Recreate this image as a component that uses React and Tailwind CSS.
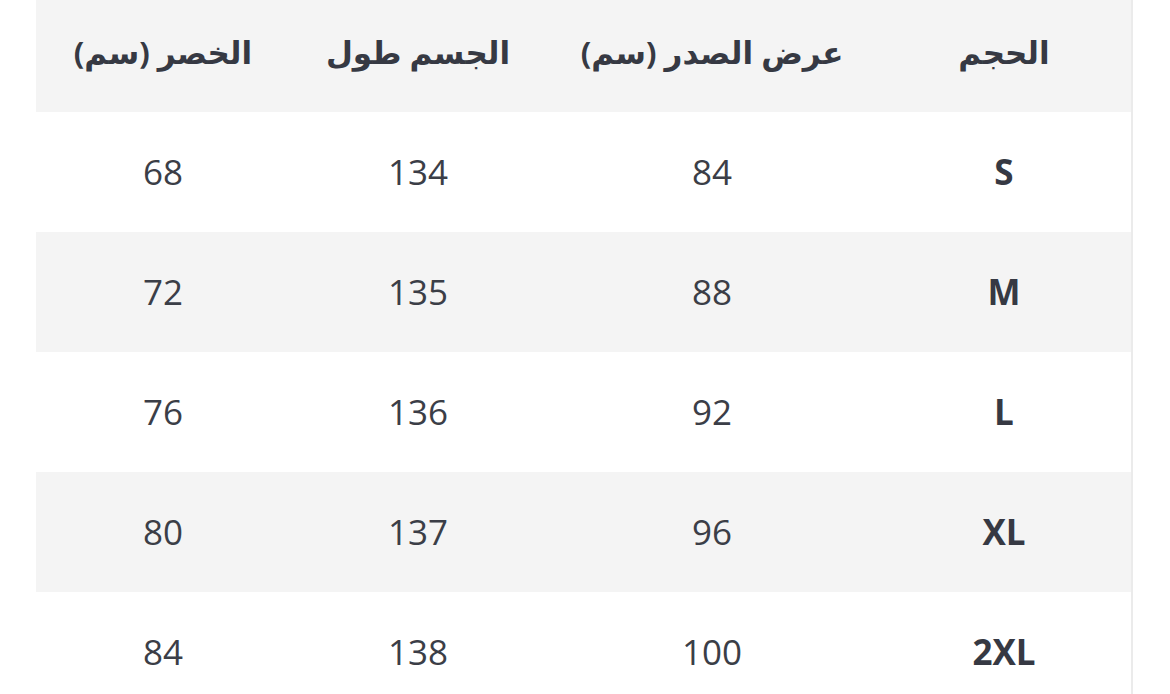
import React from "react";

const rows = [
  ["S", "84", "134", "68"],
  ["M", "88", "135", "72"],
  ["L", "92", "136", "76"],
  ["XL", "96", "137", "80"],
  ["2XL", "100", "138", "84"],
];

const widths = ["w-[254px]", "w-[330px]", "w-[258px]", "w-[252px]"];

export default function App() {
  return (
    <div className="w-[1170px] h-[694px] overflow-hidden bg-white flex" style={{ fontFamily: '"Open Sans", "DejaVu Sans", sans-serif' }}>
      <div className="w-[36px] shrink-0" />
      <div dir="rtl" className="w-[1095px] shrink-0 flex flex-col text-[#363943]">
        <div className="flex h-[112px] shrink-0 bg-[#f4f4f4] items-center">
          {["الحجم", "عرض الصدر (سم)", "الجسم طول", "الخصر (سم)"].map((t, i) => (
            <div key={i} className={`${widths[i]} shrink-0 text-center text-[31px] font-bold leading-none pb-[8px]`}>
              {t}
            </div>
          ))}
        </div>
        {rows.map((r, ri) => (
          <div key={ri} className={`flex h-[120px] shrink-0 items-center ${ri % 2 === 1 ? "bg-[#f4f4f4]" : "bg-white"}`}>
            {r.map((c, ci) => (
              <div
                key={ci}
                dir="ltr"
                className={`${widths[ci]} shrink-0 text-center text-[35px] leading-none pb-[2px] ${ci === 0 ? "font-bold text-[#363943]" : "font-normal text-[#3b3e47]"}`}
              >
                {c}
              </div>
            ))}
          </div>
        ))}
      </div>
      <div className="w-[2px] shrink-0 bg-[#ebebeb] h-full" />
      <div className="flex-1" />
    </div>
  );
}
